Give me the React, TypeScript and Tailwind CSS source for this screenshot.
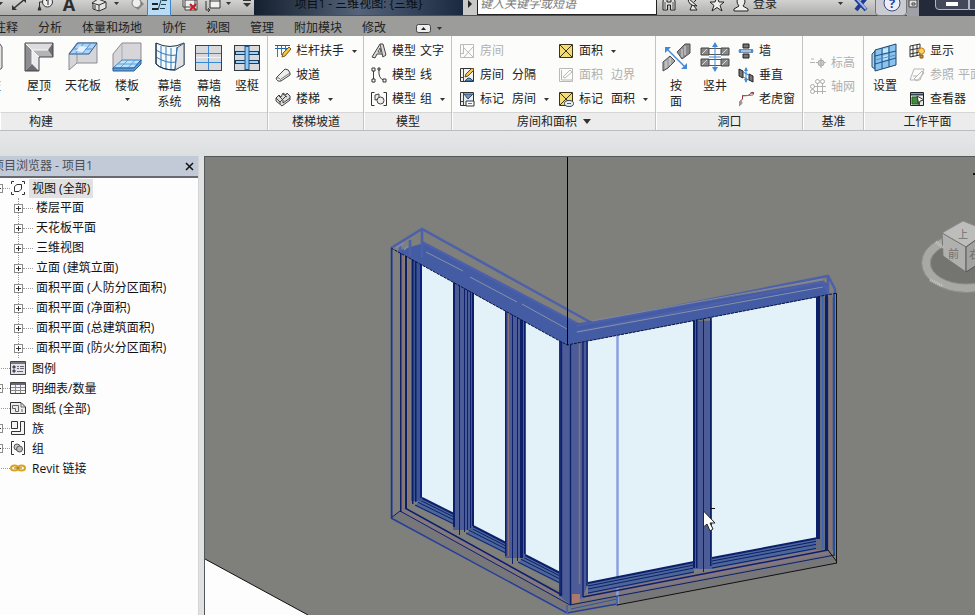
import React from "react";

type IconProps = { children: React.ReactNode; size?: number; className?: string };

function Icon({ children, size = 16, className = "" }: IconProps) {
  return (
    <svg
      width={size}
      height={size}
      viewBox={`0 0 ${size} ${size}`}
      fill="none"
      stroke="#333"
      aria-hidden="true"
      className={`shrink-0 ${className}`}
    >
      {children}
    </svg>
  );
}

function Caret({ className = "" }: { className?: string }) {
  return (
    <svg width="5" height="3" viewBox="0 0 5 3" aria-hidden="true" className={`shrink-0 ${className}`}>
      <path d="M0 0H5L2.5 3Z" fill="#333" />
    </svg>
  );
}

/* ---------- large ribbon icons (30 x 30) ---------- */

const ColumnIcon = () => (
  <Icon size={30}>
    <path d="M8 2H20L22 5V26L19 28H8Z" fill="#e4e4e6" stroke="#555" />
  </Icon>
);

const RoofIcon = () => (
  <Icon size={30}>
    <path d="M1 1H29L24 8H8V22L1 29Z" fill="#dcdcde" stroke="none" />
    <path d="M1 1L8 8V22L1 29Z" fill="#8e8e92" stroke="none" />
    <path d="M8 8H24L29 15H15Z" fill="#b4b4b7" stroke="none" />
    <path d="M8 8L15 15V29L8 22Z" fill="#ececee" stroke="none" />
    <path d="M8 22L15 29H1ZM24 8L29 1V15Z" fill="#6d6d71" stroke="none" />
    <path d="M1 1L15 15M8 8H24M8 8V22" stroke="#fafafa" />
    <path d="M1 1H29V15H15V29H1Z" stroke="#444" />
  </Icon>
);

const CeilingIcon = () => (
  <Icon size={30}>
    <path d="M9 1H29V21H9L1 28V12Z" fill="#d6d6da" stroke="#8b8b8f" />
    <path d="M9 12V21" stroke="#999" />
    <path d="M10 1H29L21 12H1Z" fill="#aed3f6" stroke="#275c94" />
    <path d="M5 7H24M16 1L7 12M23 1L14 12" stroke="#4d92d4" />
    <path d="M12 4L19 5L15 10L8 9Z" fill="#e5f2fd" stroke="none" />
  </Icon>
);

const FloorIcon = () => (
  <Icon size={30}>
    <path d="M10 1H29V19H10L1 27V12Z" fill="#d6d6da" stroke="#8b8b8f" />
    <path d="M10 1V19" stroke="#aaa" />
    <path d="M10 18H29L22 26H1Z" fill="#c0e1fb" stroke="#3983c7" />
    <path d="M6 22H25M16 18L8 26M23 18L16 26" stroke="#5ba2df" />
    <path d="M1 26H22L29 18V22L22 29H1Z" fill="#5a9edb" stroke="#275c94" />
  </Icon>
);

const CurtainSystemIcon = () => (
  <Icon size={30}>
    <path d="M1 1Q15 8 29 1V23L20 28Q7 28 1 22Z" fill="#f4f9fd" stroke="#234" />
    <path d="M22 6L29 1V23L20 28Z" fill="#dfe2e6" stroke="#456" />
    <path d="M1 8Q12 15 22 13M1 15Q12 22 21 20M6 4V25M11 5V27M16 6V28M22 5L20 28" stroke="#3378b5" />
    <path d="M1 1V22Q7 28 20 28" stroke="#16324f" />
  </Icon>
);

const CurtainGridIcon = () => (
  <Icon size={30}>
    <rect x="1.5" y="3.5" width="26" height="25" fill="#d8d9dc" stroke="#3c4248" />
    <path d="M14.5 4V28M2 11.5H27M2 20.5H27" stroke="#3988d5" />
    <path d="M2 15.5H27" stroke="#f3f3f3" />
  </Icon>
);

const MullionIcon = () => (
  <Icon size={30}>
    <rect x="2.5" y="3.5" width="25" height="25" fill="#d8d9dc" stroke="#333a40" />
    <path d="M3 11H27M3 20H27" stroke="#183c60" strokeWidth="4" />
    <path d="M4 11H26M4 20H26" stroke="#9fd0f8" strokeWidth="2" />
    <path d="M15 4V28" stroke="#1e5488" strokeWidth="5" />
    <path d="M15 5V27" stroke="#8fc7f6" strokeWidth="3" />
  </Icon>
);

const ByFaceIcon = () => (
  <Icon size={30}>
    <path d="M16 10L24 2H29V11L21 17Z" fill="#8b8b8e" stroke="#4c4c4f" />
    <path d="M2 20L9 14L14 19L7 26L2 29Z" fill="#a5a5a8" stroke="#4c4c4f" />
    <path d="M21 7V15M24 4V13M5 19V26M9 16V23" stroke="#ddd" />
    <path d="M6 7L24 25" stroke="#4389d8" strokeWidth="1.5" />
    <path d="M4 5H10L4 11ZM26 27H20L26 21Z" fill="#4389d8" stroke="none" />
  </Icon>
);

const ShaftIcon = () => (
  <Icon size={30}>
    <path d="M1 6H9V13H1ZM21 6H29V13H21ZM1 17H9V24H1ZM21 17H29V24H21Z" fill="#88888b" stroke="#444" />
    <path d="M2 12L7 7M22 12L27 7M2 23L7 18M22 23L27 18" stroke="#ddd" />
    <path d="M9 6.5H21M9 12.5H21M9 17.5H21M9 23.5H21" stroke="#555" />
    <path d="M15 3V28M9 15H21" stroke="#4389d8" />
    <path d="M15 0L18 5H12ZM15 30L18 25H12Z" fill="#4389d8" stroke="none" />
  </Icon>
);

const SetPlaneIcon = () => (
  <Icon size={30}>
    <path d="M2 12L5 9V27L2 25Z" fill="#a9d1f0" stroke="#23527e" />
    <path d="M5 8L26 2V23L5 29Z" fill="#8ac4ee" stroke="#1e4770" />
    <path d="M5 14L26 9M5 22L26 16M12 6V27M19 4V25" stroke="#1f5385" />
    <path d="M13 7L18 6V10L13 11ZM13 14L18 13V17L13 18Z" fill="#c8e7fb" stroke="none" />
    <path d="M5 18L26 13" stroke="#4b93cd" />
  </Icon>
);

/* ---------- small ribbon icons (16 x 16) ---------- */

const RailingIcon = () => (
  <Icon>
    <path d="M0 2.5H15M0 5.5H15" stroke="#1b5c9c" />
    <path d="M2.5 3V14M6.5 3V12M10.5 3V8" stroke="#2f7ac0" />
    <path d="M7 14L8 10L14 4L16 6L10 13Z" fill="#f0c34c" stroke="#7a5514" />
  </Icon>
);
const RampIcon = () => (
  <Icon>
    <path d="M1 11L10 2Q14 2 15 6V8L6 14Q2 15 1 11Z" fill="#eee" stroke="#444" />
    <path d="M6 14Q5 10 1 11M6 12L15 6" stroke="#777" />
  </Icon>
);
const StairIcon = () => (
  <Icon>
    <path d="M1 7L4 4L6 6L8 2L11 4L12 2L15 5V9L7 15L1 10Z" fill="#ddd" stroke="#444" />
    <path d="M1 7L5 11L11 5M4 5L8 9M8 3L12 6M5 11V13M8 9V12L15 7" stroke="#444" />
  </Icon>
);
const ModelTextIcon = () => (
  <Icon>
    <path d="M1 14L9 1H12L15 12L12 14L11 11H6L4 15Z" fill="#d9d9da" stroke="#444" />
    <path d="M7 9L9 5L10 9ZM9 1L12 14" fill="#fff" stroke="#555" />
  </Icon>
);
const ModelLineIcon = () => (
  <Icon>
    <path d="M2.5 3V13M8 2Q7 12 13 13" stroke="#444" />
    <path d="M1 1H4V4H1ZM1 12H4V15H1ZM7 1H9V3H7ZM12 12H15V15H12Z" fill="#fff" stroke="#333" />
  </Icon>
);
const ModelGroupIcon = () => (
  <Icon>
    <path d="M3.5 1.5H.5V14.5H3.5M12.5 1.5H15.5V14.5H12.5" stroke="#333" />
    <path d="M4 4L8 3V8L4 9Z" fill="#eee" stroke="#444" />
    <circle cx="9.5" cy="9.5" r="3.5" fill="#eee" stroke="#444" />
  </Icon>
);
const RoomIcon = () => (
  <Icon>
    <path d="M1.5 1.5H14.5V14.5H1.5ZM4.5 1.5V10M1.5 10.5H5M5 5L14 14M14 4L5 14" stroke="#bbb" />
  </Icon>
);
const RoomSeparatorIcon = () => (
  <Icon>
    <path d="M1.5 1.5H14.5V14.5H1.5Z" fill="#f2f2f0" stroke="#333" />
    <path d="M4.5 2V14M2 10.5H5" stroke="#444" />
    <path d="M6 14Q10 8 14 14Z" fill="#66a4dc" stroke="#246" />
    <path d="M6 10L7 7L13 1L15 3L9 9Z" fill="#f2c94f" stroke="#6b4c13" />
  </Icon>
);
const RoomTagIcon = () => (
  <Icon>
    <path d="M1.5 1.5H14.5V14.5H1.5Z" fill="#e8eef2" stroke="#333" />
    <path d="M4.5 2V14M2 10.5H5" stroke="#444" />
    <path d="M5 3H14L9 8Z" fill="#6d9cb8" stroke="#346" />
    <path d="M7 10H15V15H7Z" fill="#fff" stroke="#333" />
    <path d="M9 12.5H13" stroke="#777" />
  </Icon>
);
const AreaIcon = () => (
  <Icon>
    <path d="M1.5 1.5H14.5V14.5H1.5Z" fill="#f3dc74" stroke="#3a3214" />
    <path d="M2 2L14 14M14 2L2 14" stroke="#3a3214" />
  </Icon>
);
const AreaBoundaryIcon = () => (
  <Icon>
    <path d="M1.5 1.5H14.5V14.5H1.5ZM3.5 3V13H14M5 10L12 3L14 5L7 11Z" stroke="#b9b9b9" />
  </Icon>
);
const AreaTagIcon = () => (
  <Icon>
    <path d="M1.5 1.5H14.5V14.5H1.5Z" fill="#f3dc74" stroke="#3a3214" />
    <path d="M2 2L14 14M14 2L2 14" stroke="#3a3214" />
    <ellipse cx="11" cy="12.5" rx="4.5" ry="3" fill="#e8eef6" stroke="#345" />
    <path d="M9 12.5H13" stroke="#467" />
  </Icon>
);
const WallOpeningIcon = () => (
  <Icon>
    <path d="M5 1H11V5H5ZM5 11H11V15H5Z" fill="#777" stroke="#222" />
    <path d="M1 6.5H15M1 9.5H15" stroke="#7d8fa3" />
    <path d="M2 8H14" stroke="#4389d8" />
    <path d="M0 8L3 6V10ZM16 8L13 6V10Z" fill="#4389d8" stroke="none" />
  </Icon>
);
const VerticalOpeningIcon = () => (
  <Icon>
    <path d="M1 2L5 4V11L1 9ZM11 7L15 9V15L11 13Z" fill="#777" stroke="#222" />
    <path d="M8 1V15M5 5L11 8M5 10L11 13" stroke="#3b7fc4" />
    <path d="M8 0L10 4H6ZM8 16L10 12H6Z" fill="#4389d8" stroke="none" />
  </Icon>
);
const DormerIcon = () => (
  <Icon>
    <path d="M1.5 15V11L4.5 8V4.5H10L15 1" stroke="#9a2f3c" />
    <path d="M4.5 12L1 15M5 5L15 4" stroke="#777" />
    <path d="M12 1H16V4Z" fill="#a44" stroke="none" />
    <path d="M1 11L4 8V12L1 15Z" fill="#999" stroke="none" />
  </Icon>
);
const LevelIcon = () => (
  <Icon>
    <path d="M0 7.5H5M6 7.5H16M1 4L4 4" stroke="#b2b2b2" />
    <circle cx="11" cy="8" r="3" fill="#ccc" stroke="#aaa" />
    <path d="M11 3V13" stroke="#aaa" />
  </Icon>
);
const GridIcon = () => (
  <Icon>
    <path d="M7.5 4V15M12.5 4V15M4 7.5H16M4 12.5H16" stroke="#b2b2b2" />
    <circle cx="7.5" cy="2.5" r="2" stroke="#aaa" />
    <circle cx="12.5" cy="2.5" r="2" stroke="#aaa" />
    <circle cx="2.5" cy="7.5" r="2" stroke="#aaa" />
    <circle cx="2.5" cy="12.5" r="2" stroke="#aaa" />
  </Icon>
);
const ShowPlaneIcon = () => (
  <Icon>
    <path d="M1 3L11 1V12L1 14ZM4 2V14M8 2V13M1 7L11 5M1 11L11 9" stroke="#333" />
    <circle cx="12.5" cy="8" r="3" fill="#ffd257" stroke="#c47f1d" />
    <path d="M11 12H14V15H11Z" fill="#d39333" stroke="#8a5a16" />
  </Icon>
);
const ReferencePlaneIcon = () => (
  <Icon>
    <path d="M5 2H15L11 13H1ZM4 9H8M5 12L13 4L15 6L8 14Z" stroke="#b5b5b5" />
  </Icon>
);
const ViewerIcon = () => (
  <Icon>
    <path d="M1.5 1.5H14.5V14.5H1.5Z" fill="#e8ece8" stroke="#222" />
    <path d="M2 3.5H14" stroke="#345" strokeWidth="2" />
    <path d="M3 6H9V13H3Z" fill="#3f8e3f" stroke="#275f27" />
    <path d="M8 5L15 9L11 10L10 14Z" fill="#fff" stroke="#333" />
  </Icon>
);

/* ---------- ribbon building blocks ---------- */

function Panel({
  title,
  className,
  titleClass = "justify-center",
  caret = false,
  children,
}: {
  title: string;
  className: string;
  titleClass?: string;
  caret?: boolean;
  children: React.ReactNode;
}) {
  return (
    <section
      aria-label={title}
      className={`flex shrink-0 flex-col border-r border-[#c3c3c3] bg-[#fcfcfb] ${className}`}
    >
      <div className="flex h-[76px] pt-[3px]">{children}</div>
      <div className={`flex h-[18px] items-center border-t border-l border-[#d6d6d6] border-l-white bg-[#ececec] ${titleClass}`}>
        {title}
        {caret && (
          <svg width="8" height="5" viewBox="0 0 8 5" aria-hidden="true" className="ml-1.5">
            <path d="M0 0H8L4 5Z" fill="#333" />
          </svg>
        )}
      </div>
    </section>
  );
}

function BigButton({
  icon,
  lines,
  className,
  caret = false,
}: {
  icon: React.ReactNode;
  lines: string[];
  className: string;
  caret?: boolean;
}) {
  return (
    <button type="button" className={`flex shrink-0 flex-col items-center pt-[3px] leading-4 ${className}`}>
      {icon}
      <span className="mt-1.5 flex flex-col whitespace-nowrap">
        {lines.map((line) => (
          <span key={line}>{line}</span>
        ))}
      </span>
      {caret && <Caret className="mt-1" />}
    </button>
  );
}

function SmallButton({
  icon,
  words,
  caret = false,
  disabled = false,
  wide = false,
}: {
  icon: React.ReactNode;
  words: string[];
  caret?: boolean;
  disabled?: boolean;
  wide?: boolean;
}) {
  return (
    <button
      type="button"
      disabled={disabled}
      className={`flex h-6 items-center whitespace-nowrap ${disabled ? "text-[#b0b0b0]" : ""}`}
    >
      {icon}
      <span className={`ml-[5px] flex ${wide ? "gap-2" : "gap-1"}`}>
        {words.map((word) => (
          <span key={word}>{word}</span>
        ))}
      </span>
      {caret && <Caret className="ml-2" />}
    </button>
  );
}

function Ribbon() {
  return (
    <div className="flex h-[95px] shrink-0 overflow-hidden border-b border-[#bdbdbd] bg-[#fcfcfb]">
      <Panel title="构建" className="w-[268px]" titleClass="pl-7">
        <div className="-ml-[27px] flex">
          <BigButton className="w-11" icon={<ColumnIcon />} lines={["柱"]} />
          <BigButton className="w-11" icon={<RoofIcon />} lines={["屋顶"]} caret />
          <BigButton className="w-11" icon={<CeilingIcon />} lines={["天花板"]} />
          <BigButton className="w-11" icon={<FloorIcon />} lines={["楼板"]} caret />
          <BigButton className="w-[41px]" icon={<CurtainSystemIcon />} lines={["幕墙", "系统"]} />
          <BigButton className="w-[38px]" icon={<CurtainGridIcon />} lines={["幕墙", "网格"]} />
          <BigButton className="w-[38px]" icon={<MullionIcon />} lines={["竖梃"]} />
        </div>
      </Panel>
      <Panel title="楼梯坡道" className="w-24">
        <div className="pl-[7px]">
          <SmallButton icon={<RailingIcon />} words={["栏杆扶手"]} caret />
          <SmallButton icon={<RampIcon />} words={["坡道"]} />
          <SmallButton icon={<StairIcon />} words={["楼梯"]} caret />
        </div>
      </Panel>
      <Panel title="模型" className="w-[88px]">
        <div className="pl-[7px]">
          <SmallButton icon={<ModelTextIcon />} words={["模型", "文字"]} />
          <SmallButton icon={<ModelLineIcon />} words={["模型", "线"]} />
          <SmallButton icon={<ModelGroupIcon />} words={["模型", "组"]} caret />
        </div>
      </Panel>
      <Panel title="房间和面积" className="w-[204px]" caret>
        <div className="w-[106px] pl-[7px]">
          <SmallButton icon={<RoomIcon />} words={["房间"]} disabled wide />
          <SmallButton icon={<RoomSeparatorIcon />} words={["房间", "分隔"]} wide />
          <SmallButton icon={<RoomTagIcon />} words={["标记", "房间"]} caret wide />
        </div>
        <div>
          <SmallButton icon={<AreaIcon />} words={["面积"]} caret wide />
          <SmallButton icon={<AreaBoundaryIcon />} words={["面积", "边界"]} disabled wide />
          <SmallButton icon={<AreaTagIcon />} words={["标记", "面积"]} caret wide />
        </div>
      </Panel>
      <Panel title="洞口" className="w-[147px]">
        <BigButton className="w-10" icon={<ByFaceIcon />} lines={["按", "面"]} />
        <BigButton className="w-[38px]" icon={<ShaftIcon />} lines={["竖井"]} />
        <div className="pl-1">
          <SmallButton icon={<WallOpeningIcon />} words={["墙"]} />
          <SmallButton icon={<VerticalOpeningIcon />} words={["垂直"]} />
          <SmallButton icon={<DormerIcon />} words={["老虎窗"]} />
        </div>
      </Panel>
      <Panel title="基准" className="w-[61px]">
        <div className="pt-3 pl-[7px]">
          <SmallButton icon={<LevelIcon />} words={["标高"]} disabled />
          <SmallButton icon={<GridIcon />} words={["轴网"]} disabled />
        </div>
      </Panel>
      <Panel title="工作平面" className="w-[127px]">
        <BigButton className="w-[42px]" icon={<SetPlaneIcon />} lines={["设置"]} />
        <div className="pl-[3px]">
          <SmallButton icon={<ShowPlaneIcon />} words={["显示"]} />
          <SmallButton icon={<ReferencePlaneIcon />} words={["参照", "平面"]} disabled />
          <SmallButton icon={<ViewerIcon />} words={["查看器"]} />
        </div>
      </Panel>
    </div>
  );
}

/* ---------- title bar ---------- */

function QuickAccess() {
  return (
    <div className="flex w-[254px] shrink-0 items-center bg-linear-to-b from-[#e6e6e4] to-[#adadab]">
      <Caret className="-ml-0.5" />
      <button type="button" aria-label="对齐尺寸标注" className="ml-2">
        <Icon>
          <path d="M2 13L14 3" stroke="#333" strokeWidth="1.5" />
          <path d="M1 9V14H6ZM15 7V2H10Z" fill="#333" stroke="none" />
        </Icon>
      </button>
      <button type="button" aria-label="按类别标记" className="ml-2.5">
        <Icon>
          <path d="M2.5 14V6H8" stroke="#333" />
          <path d="M1 14L2.5 10L4 14Z" fill="#333" />
          <circle cx="10.5" cy="6" r="5" fill="#eee" stroke="#333" />
          <path d="M9 5L11 3V9" stroke="#222" />
        </Icon>
      </button>
      <button type="button" aria-label="文字" className="ml-2 w-4 text-lg leading-5 font-bold text-[#2d2d2d]">
        A
      </button>
      <button type="button" aria-label="默认三维视图" className="ml-3.5">
        <Icon>
          <path d="M1 7L7 3L15 6V12L8 15L2 13V8Z" fill="#e4e4e4" stroke="#333" />
          <path d="M1 7L8 9L15 6M8 9V15M4 9V13" stroke="#333" />
        </Icon>
      </button>
      <Caret className="ml-[7px]" />
      <button type="button" aria-label="剖面" className="ml-2.5">
        <Icon>
          <path d="M3 8L9 2L15 8L9 14Z" fill="#888" stroke="none" />
          <circle cx="7.5" cy="7" r="4.5" fill="#efefef" stroke="#777" />
        </Icon>
      </button>
      <button type="button" aria-label="细线" className="ml-0.5 flex h-6 w-6 items-center justify-center border border-[#3d84c8] bg-[#b8dcf8]">
        <Icon>
          <path d="M1 3H7M1 8H7M1 13H7" stroke="#222" strokeWidth="2" />
          <path d="M7 14L11 1M11 4.5H16M10 8.5H15M9 12.5H14" stroke="#245" />
        </Icon>
      </button>
      <button type="button" aria-label="关闭隐藏窗口" className="ml-[11px]">
        <Icon>
          <path d="M1 1H13V11H1ZM3 4H15V14H3Z" fill="#eee" stroke="#444" />
          <path d="M8 8L14 14M14 8L8 14" stroke="#c31d22" strokeWidth="2" />
        </Icon>
      </button>
      <button type="button" aria-label="切换窗口" className="ml-[7px]">
        <Icon>
          <path d="M5 3H15V12H5Z" fill="#f1f1f1" stroke="#333" />
          <path d="M5 5H15M1 5V14H5M3 12L5 14L3 16" stroke="#333" />
        </Icon>
      </button>
      <Caret className="ml-[5px]" />
      <svg width="8" height="9" viewBox="0 0 8 9" aria-hidden="true" className="ml-3">
        <path d="M0 1.5H8" stroke="#333" />
        <path d="M0 4H8L4 8Z" fill="#333" />
      </svg>
    </div>
  );
}

function TitleBar() {
  return (
    <header className="-mt-2 flex h-6 shrink-0 border-b border-[#4c4f54]">
      <QuickAccess />
      <div className="flex w-[209px] shrink-0 items-center justify-center bg-linear-to-r from-[#14202f] via-[#56647a] to-[#1b2940]">
        <h1 className="whitespace-nowrap text-[#0a0d12]">项目1 - 三维视图: {"{三维}"}</h1>
      </div>
      <button type="button" aria-label="展开搜索" className="flex w-3.5 shrink-0 items-center justify-center bg-[#c9c9c7]">
        <svg width="4" height="8" viewBox="0 0 4 8" aria-hidden="true">
          <path d="M0 0L4 4L0 8Z" fill="#222" />
        </svg>
      </button>
      <input
        type="text"
        aria-label="搜索"
        placeholder="键入关键字或短语"
        className="w-[180px] shrink-0 border border-[#222] bg-white px-0.5 text-xs italic outline-none placeholder:text-[#777]"
      />
      <div className="flex min-w-0 flex-1 items-center bg-linear-to-b from-[#e6e6e4] to-[#adadab] pl-1">
        <button type="button" aria-label="查找">
          <Icon>
            <path d="M2 5L4 1H6V6H10V1H12L14 5V14H9.5V9H6.5V14H2Z" fill="#ddd" stroke="#222" />
            <path d="M4 6V13M12 6V13" stroke="#555" />
          </Icon>
        </button>
        <button type="button" aria-label="通讯中心" className="ml-2">
          <Icon>
            <path d="M3 2Q3 10 12 10ZM9 6L14 1M7 9L5 14H12L9 10" fill="#e8e8e8" stroke="#222" />
          </Icon>
        </button>
        <button type="button" aria-label="收藏夹" className="ml-2">
          <Icon>
            <path d="M8 1L10 6H15L11 9.5L13 15L8 11.5L3 15L5 9.5L1 6H6Z" fill="#eee" stroke="#222" />
          </Icon>
        </button>
        <button type="button" className="ml-2 flex items-center whitespace-nowrap">
          <Icon>
            <path d="M8 1Q12 1 12 6Q11 9 10 10L15 13V15H1V13L6 10Q4 8 4 5Q4 1 8 1Z" fill="#eee" stroke="#222" />
          </Icon>
          <span className="ml-1">登录</span>
        </button>
        <Caret className="ml-[61px]" />
        <button type="button" aria-label="Exchange Apps" className="ml-2.5">
          <Icon>
            <path d="M2 2L13 14M13 2L3 14" stroke="#203c91" strokeWidth="4" />
            <path d="M3 2L13 13" stroke="#9fb5ef" strokeWidth="2" />
          </Icon>
        </button>
        <button type="button" aria-label="帮助" className="ml-1.5 flex h-6 w-8 items-center justify-center rounded-b border border-[#777] bg-[#c9cbd0]">
          <Icon size={20}>
            <circle cx="11" cy="9" r="8" fill="#eceff8" stroke="#3c4a80" />
            <text x="11" y="14" textAnchor="middle" fontSize="13" fontWeight="700" fill="#2b459c" stroke="none">
              ?
            </text>
          </Icon>
        </button>
        <button type="button" aria-label="还原文档窗口" className="flex h-6 w-3 items-center justify-center bg-[#9ea1a8]">
          <Icon size={12}>
            <path d="M2 2H10V9H2ZM5 5H8V7H5Z" fill="#ddd" stroke="#444" />
          </Icon>
        </button>
        <div className="flex h-6 min-w-0 flex-1 items-start overflow-hidden bg-[#252a3a] pl-4">
          <button type="button" aria-label="最小化" className="flex h-[18px] w-[34px] shrink-0 items-center justify-center rounded-bl border border-[#b5b8c2] bg-[#43485a]">
            <span className="mt-1.5 h-1 w-3 bg-white" />
          </button>
          <button type="button" aria-label="最大化" className="flex h-[18px] w-7 shrink-0 items-center justify-center border border-[#b5b8c2] bg-[#43485a]">
            <span className="h-2.5 w-3 border-2 border-white" />
          </button>
        </div>
      </div>
    </header>
  );
}

const TABS = ["注释", "分析", "体量和场地", "协作", "视图", "管理", "附加模块", "修改"];

function TabBar() {
  return (
    <nav className="flex h-5 shrink-0 items-center gap-5 overflow-hidden bg-[#9c9c9a] pt-1">
      <div className="-ml-1.5 flex gap-5">
        {TABS.map((tab) => (
          <button type="button" key={tab} className="whitespace-nowrap text-[#222]">
            {tab}
          </button>
        ))}
      </div>
      <button type="button" aria-label="最小化功能区" className="ml-2.5 flex items-center gap-1.5">
        <svg width="15" height="9" viewBox="0 0 15 9" aria-hidden="true">
          <rect x=".5" y=".5" width="14" height="8" rx="2" fill="#eee" stroke="#444" />
          <path d="M5 6L7.5 3L10 6Z" fill="#222" />
        </svg>
        <Caret />
      </button>
    </nav>
  );
}

/* ---------- project browser ---------- */

const VIEW_ITEMS = [
  "楼层平面",
  "天花板平面",
  "三维视图",
  "立面 (建筑立面)",
  "面积平面 (人防分区面积)",
  "面积平面 (净面积)",
  "面积平面 (总建筑面积)",
  "面积平面 (防火分区面积)",
];

const ViewsIcon = () => (
  <Icon>
    <path d="M4 1.5H1.5V4M12 1.5H14.5V4M1.5 12V14.5H4M14.5 12V14.5H12" stroke="#333" />
    <path d="M4.5 6.5L7 4.5H11.5V9L9 11.5H4.5Z" stroke="#333" />
  </Icon>
);
const LegendIcon = () => (
  <Icon>
    <path d="M.5 1.5H15.5V14.5H.5Z" fill="#e3e5e8" stroke="#444" />
    <path d="M1 3H15" stroke="#777" strokeWidth="2" />
    <path d="M3 6H5V8H3ZM3 10H5V12H3Z" fill="#557" stroke="#445" />
    <path d="M7 6.5H9M10 6.5H14M7 8.5H9M10 8.5H14M7 11.5H13" stroke="#667" />
  </Icon>
);
const ScheduleIcon = () => (
  <Icon>
    <path d="M.5 2.5H15.5V13.5H.5Z" fill="#f5f5f5" stroke="#444" />
    <path d="M1 4H15" stroke="#667" strokeWidth="2" />
    <path d="M1 7.5H15M1 10.5H15M5.5 5V13M10.5 5V13" stroke="#888" />
  </Icon>
);
const SheetIcon = () => (
  <Icon>
    <path d="M.5 2.5H11L15.5 7V13.5H.5Z" fill="#eee" stroke="#333" />
    <path d="M11 3V7H15M2.500 5.500H8.500V11.500H5.500V8.500H2.500ZM12 9V12" stroke="#666" />
  </Icon>
);
const FamilyIcon = () => (
  <Icon>
    <path d="M1.5 1.5H7.5V8.5H1.5ZM10.5 1.5H14.5V14.5H1.5V11.5H10.5Z" fill="#f4f4f4" stroke="#333" />
  </Icon>
);
const GroupIcon = () => (
  <Icon>
    <path d="M4 1.5H1.5V14.5H4M12 1.5H14.5V14.5H12" stroke="#333" />
    <circle cx="7" cy="7" r="3" fill="#ccc" stroke="#555" />
    <circle cx="9.5" cy="9" r="3" fill="#bbb" stroke="#555" />
  </Icon>
);
const LinkIcon = () => (
  <Icon>
    <ellipse cx="4.5" cy="8" rx="3.5" ry="2.5" stroke="#d6a421" strokeWidth="2" />
    <ellipse cx="11.5" cy="8" rx="3.5" ry="2.5" stroke="#d6a421" strokeWidth="2" />
    <path d="M4 8H12" stroke="#8b650c" />
  </Icon>
);

const ROOT_ITEMS = [
  { label: "图例", icon: <LegendIcon />, box: false },
  { label: "明细表/数量", icon: <ScheduleIcon />, box: true },
  { label: "图纸 (全部)", icon: <SheetIcon />, box: false },
  { label: "族", icon: <FamilyIcon />, box: true },
  { label: "组", icon: <GroupIcon />, box: true },
  { label: "Revit 链接", icon: <LinkIcon />, box: false },
];

function Expander({ plus = true }: { plus?: boolean }) {
  return (
    <svg width="9" height="9" viewBox="0 0 9 9" aria-hidden="true" className="shrink-0">
      <rect x=".5" y=".5" width="8" height="8" fill="#fff" stroke="#8c8c8c" />
      <path d={plus ? "M2 4.5H7M4.5 2V7" : "M2 4.5H7"} stroke="#333" />
    </svg>
  );
}

function RootRow({
  label,
  icon,
  box,
  plus = true,
  selected = false,
}: {
  label: string;
  icon: React.ReactNode;
  box: boolean;
  plus?: boolean;
  selected?: boolean;
}) {
  return (
    <div className="flex h-5 items-center">
      <div className="-ml-1.5 flex w-4 items-center">
        {box && <Expander plus={plus} />}
        <span className="flex-1 border-t border-dotted border-[#999]" />
      </div>
      {icon}
      <span className={`ml-[3px] px-[3px] leading-[19px] whitespace-nowrap ${selected ? "bg-[#e1e1e1]" : ""}`}>
        {label}
      </span>
    </div>
  );
}

function ProjectBrowser() {
  return (
    <aside className="w-[199px] shrink-0 overflow-hidden border-r border-[#d5d5d5] bg-[#fdfdfd]">
      <div className="flex h-[22px] items-center justify-between border-b-2 border-[#666a70] bg-[#c2cad8] pr-1">
        <h2 className="-ml-2 whitespace-nowrap text-[#4a4f57]">项目浏览器 - 项目1</h2>
        <button type="button" aria-label="关闭">
          <svg width="9" height="9" viewBox="0 0 9 9" aria-hidden="true">
            <path d="M1 1L8 8M8 1L1 8" stroke="#111" strokeWidth="1.5" />
          </svg>
        </button>
      </div>
      <ul className="text-[#111]">
        <li>
          <RootRow label="视图 (全部)" icon={<ViewsIcon />} box plus={false} selected />
          <ul className="ml-[18px] border-l border-dotted border-[#999]">
            {VIEW_ITEMS.map((item) => (
              <li key={item} className="-ml-[5px] flex h-5 items-center whitespace-nowrap">
                <Expander />
                <span className="mr-[3px] w-2.5 border-t border-dotted border-[#999]" />
                {item}
              </li>
            ))}
          </ul>
        </li>
        {ROOT_ITEMS.map((item) => (
          <li key={item.label}>
            <RootRow {...item} />
          </li>
        ))}
      </ul>
    </aside>
  );
}

/* ---------- 3D view ---------- */

const NAVY = "#0b1f6b";
const BLUE = "#2b4a9f";
const FILL = "#4c5c97";
const GLASS = "#e3f1f9";
const BROWN = "#8d7272";

/* Height of the wall's top edge at a given x, on each side of the corner. */
const topLeft = (x: number) => 248 + (x - 391) * 0.551;
const topRight = (x: number) => 345 - (x - 567) * 0.193;

type Member = [x: number, width: number, bottom: number, color: string];

const LEFT_MEMBERS: Member[] = [
  [391, 1.5, 518, BLUE],
  [400, 1.5, 512, NAVY],
  [402, 2, 511, BROWN],
  [405, 2, 508, NAVY],
  [408, 2, 507, BROWN],
  [411, 11, 501, "#3c5590"],
  [412, 1.5, 504, NAVY],
  [415, 1.5, 502, NAVY],
  [420, 2, 498, "#0a1f86"],
  [453, 20, 530, FILL],
  [453, 2, 527, NAVY],
  [459, 1, 535, NAVY],
  [464, 1, 532, NAVY],
  [467, 1, 530, NAVY],
  [470, 1, 528, NAVY],
  [472, 2, 526, NAVY],
  [505, 20, 558, FILL],
  [505, 1.5, 556, NAVY],
  [508, 1, 556, BROWN],
  [512, 1, 564, NAVY],
  [517, 1, 561, NAVY],
  [520, 3, 558, NAVY],
  [524, 1.5, 554, NAVY],
];

const RIGHT_MEMBERS: Member[] = [
  [693, 19, 569, FILL],
  [693, 2, 568, NAVY],
  [696, 1.5, 568, NAVY],
  [703, 1, 572, NAVY],
  [710, 1.5, 566, NAVY],
  [816, 18, 550, "#666c7d"],
  [816, 4, 539, NAVY],
  [822, 1.5, 548, "#3f67ad"],
  [825, 3, 550, NAVY],
  [829, 3, 553, BROWN],
  [833, 2, 555, "#284f9c"],
];

const LEFT_SASHES = [
  { x1: 422, y1: 498, x2: 454, y2: 514 },
  { x1: 473, y1: 526, x2: 506, y2: 543 },
  { x1: 525, y1: 555, x2: 560, y2: 573 },
];

const RIGHT_SASHES = [
  { x1: 588, y1: 583, x2: 694, y2: 562 },
  { x1: 712, y1: 558, x2: 818, y2: 538 },
];

function Sash({ x1, y1, x2, y2, left }: { x1: number; y1: number; x2: number; y2: number; left: boolean }) {
  const skew = left ? 7 : 0;
  const rise = left ? 3 : 0;
  return (
    <g>
      <path d={`M${x1} ${y1}L${x2} ${y2}V${y2 + 11}L${x1 - skew} ${y1 + 11 - rise}Z`} fill="#4d6699" />
      {[0, 3, 6, 10].map((d) => (
        <path
          key={d}
          d={`M${x1 - (d * skew) / 10} ${y1 + d - (rise * d) / 10}L${x2} ${y2 + d}`}
          stroke={NAVY}
          strokeWidth={d === 0 ? 2 : 1}
        />
      ))}
    </g>
  );
}

function ModelView() {
  return (
    <svg
      role="img"
      aria-label="三维视图"
      viewBox="205 157 770 458"
      preserveAspectRatio="xMinYMin slice"
      fill="none"
      className="h-full w-full"
    >
      <rect x="205" y="157" width="770" height="458" fill="#7f7f7c" />
      <path d="M205 559L308 615H205Z" fill="#fdfdfd" />
      <path d="M205 559L308 615" stroke="#111" />

      {/* base frame */}
      <path d="M391 518L400 511L570 596L828 549L837 563L617 605L567 613Z" fill="#77777a" />
      <path d="M402 509L562 594V599L402 513ZM584 595L828 547V554L584 601Z" fill="#857780" />

      {/* glass */}
      <path d="M422 265L453 282V514L422 498ZM474 294L505 311V543L474 526ZM526 322L559 340V572L526 555Z" fill={GLASS} />
      <path d="M588 341L693 321V562L588 583ZM712 317L816 297V538L712 558Z" fill={GLASS} />
      <path d="M617.5 336V604" stroke="#8c9fe0" strokeWidth="2.5" />

      {LEFT_SASHES.map((s) => (
        <Sash key={s.x1} {...s} left />
      ))}
      {RIGHT_SASHES.map((s) => (
        <Sash key={s.x1} {...s} left={false} />
      ))}

      {LEFT_MEMBERS.map(([x, w, bottom, color]) => (
        <path key={`${x}-${w}`} d={`M${x} ${topLeft(x)}H${x + w}V${bottom}H${x}Z`} fill={color} />
      ))}
      {RIGHT_MEMBERS.map(([x, w, bottom, color]) => (
        <path key={`${x}-${w}`} d={`M${x} ${topRight(x)}H${x + w}V${bottom}H${x}Z`} fill={color} />
      ))}

      {/* corner post */}
      <path d="M559 340L567 345L588 341V583L583 597L571 605L559 596Z" fill={FILL} />
      <path d="M560 341V596M561.5 342V596M570.5 344V605M583 342V597M587 342V586" stroke={NAVY} strokeWidth="1.3" />
      <path d="M579.5 343V584" stroke={BROWN} strokeWidth="1.5" />
      <path d="M572 594H580V602L572 604Z" fill="#a9796b" />

      {/* sill lines */}
      <path d="M391 518L567 613L617 604" stroke="#253f9a" strokeWidth="1.5" />
      <path d="M391 518L400 511L570 605L835 555" stroke={NAVY} />
      <path d="M405 508L562 595M583 597L828 550" stroke={NAVY} strokeWidth="1.5" />
      <path d="M571 609L617 599" stroke="#31549c" />
      <path d="M567 605V614M617 597V606" stroke="#4663ad" strokeWidth="2" />
      <path d="M617 605L837 563M828 550L837 562" stroke="#111" />
      <path d="M836.5 293V563" stroke="#111" />

      {/* head profile, left wing */}
      <path d="M397 251L424 243L580 325L588 341L567 345Z" fill="#435ca3" />
      <path d="M391 248L422 229L590 322" stroke="#4d60ab" strokeWidth="2.5" />
      <path d="M422 229V257M400 245V253M410 240V256M422 242L580 325" stroke="#4d60ab" strokeWidth="2.5" />
      <path d="M396 248L404 243M404 250L408 246" stroke="#7c8bb4" strokeWidth="1.5" />
      <path d="M426 252L463 271M470 277L517 302M522 304L567 329" stroke="#8792a7" />

      {/* head profile, right wing */}
      <path d="M567 345L574 324L823 281L828 284V295Z" fill="#435ca3" />
      <path d="M576 326L828 276L835 289V294M576 332L823 282L829 295M828 276V294" stroke="#4d60ab" strokeWidth="2.5" />
      <path d="M592 321L823 279" stroke="#858b98" />
      <path d="M577 332L823 287" stroke="#8792a7" />

      <path d="M391 248L567 345L837 293" stroke="#08133f" strokeDasharray="3 1" />
      <path d="M391.5 248V518" stroke="#1d3586" strokeWidth="1.5" />
      <path d="M567.5 157V345" stroke="#000" />

      {/* view cube */}
      <ellipse cx="966" cy="263" rx="40" ry="25" stroke="#a8a8a5" strokeWidth="8" />
      <ellipse cx="966" cy="263" rx="44.5" ry="29.5" stroke="#8e8e8b" />
      <ellipse cx="966" cy="263" rx="35.5" ry="21" fill="#747471" stroke="#8e8e8b" />
      <path d="M942 233L963 221L988 231L966 247Z" fill="#bdbdbb" stroke="#8c8c8a" />
      <path d="M942 233L966 247V272L943 256Z" fill="#b0b0ae" stroke="#777775" />
      <path d="M966 247L988 231V258L966 272Z" fill="#a2a2a0" stroke="#555553" />
      <g fill="#70706e" fontSize="11">
        <text x="948" y="258">前</text>
        <text x="958" y="238" fontSize="10">上</text>
        <text x="969" y="259">右</text>
      </g>
      <path d="M936 242L944 248M930 280L943 286" stroke="#c6c6c4" strokeWidth="3" strokeDasharray="1 1" />
      <path d="M973 174H976" stroke="#111" strokeWidth="2" />

      {/* pointer */}
      <path d="M703.5 511V527L707 524L710 531L713 529L710 523H715Z" fill="#fff" stroke="#222" />
      <path d="M710 508.5H715" stroke="#111" />
    </svg>
  );
}

export default function App() {
  return (
    <div className="flex h-screen flex-col overflow-hidden bg-[#dfe1e2] font-['Open_Sans','Noto_Sans_CJK_SC',sans-serif] text-xs text-[#222]">
      <TitleBar />
      <TabBar />
      <Ribbon />
      <div className="h-[25px] shrink-0 bg-linear-to-b from-[#e6e7e8] to-[#dcdfe0]" />
      <div className="flex min-h-0 flex-1">
        <ProjectBrowser />
        <main className="ml-[5px] min-w-0 flex-1 border-t border-l border-[#55585a]">
          <ModelView />
        </main>
      </div>
    </div>
  );
}
